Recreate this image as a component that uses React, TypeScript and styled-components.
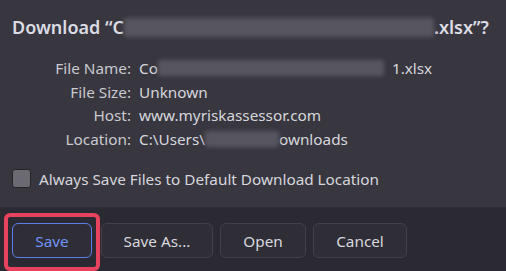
import styled, { createGlobalStyle } from "styled-components";

const Global = createGlobalStyle`
  html, body { margin: 0; padding: 0; }
  body {
    width: 506px;
    height: 271px;
    overflow: hidden;
    background: #38373f;
    font-family: "Noto Sans", "Open Sans", sans-serif;
  }
`;

const Dialog = styled.div`
  width: 506px;
  height: 271px;
  display: flex;
  flex-direction: column;
  background: #38373f;
  color: #d6d6dd;
`;

const Body = styled.div`
  flex: 1;
  padding: 13px 0 0 12px;
  display: flex;
  flex-direction: column;
`;

const Title = styled.h1`
  margin: 0;
  font-size: 18px;
  font-weight: 600;
  color: #dcdce4;
  white-space: nowrap;
  display: flex;
  align-items: center;
  height: 28px;
`;

const Smudge = styled.span<{ w: number; h?: number }>`
  display: inline-block;
  width: ${(p) => p.w}px;
  height: ${(p) => p.h ?? 16}px;
  background: #57565f;
  filter: blur(2px);
  border-radius: 3px;
  vertical-align: middle;
`;

const InfoGrid = styled.div`
  display: grid;
  grid-template-columns: 119px auto;
  column-gap: 8px;
  row-gap: 3.5px;
  margin-top: 17px;
  font-size: 15.3px;
`;

const Label = styled.div`
  text-align: right;
  color: #c9c9d0;
  height: 20px;
  line-height: 20px;
`;

const Value = styled.div`
  color: #d6d6dd;
  height: 20px;
  line-height: 20px;
  white-space: nowrap;
  display: flex;
  align-items: center;
`;

const CheckRow = styled.label`
  display: flex;
  align-items: center;
  gap: 8px;
  margin-top: 20px;
  font-size: 15.3px;
  color: #d6d6dd;
`;

const Box = styled.span`
  width: 19px;
  height: 19px;
  box-sizing: border-box;
  border: 1px solid #25242b;
  border-radius: 3px;
  background: #6b6a73;
`;

const Footer = styled.div`
  height: 64px;
  border-top: 1px solid #2f2e36;
  background: #2b2a33;
  display: flex;
  align-items: flex-start;
  gap: 7px;
  padding: 15px 0 0 12px;
  box-sizing: border-box;
`;

const Highlight = styled.div`
  border: 4px solid #e8435e;
  border-radius: 6px;
  margin: -10px -6px 0 -8px;
  padding: 6px 4px 9px 4px;
  display: flex;
`;

const Button = styled.button<{ w: number; primary?: boolean }>`
  height: 35px;
  width: ${(p) => p.w}px;
  padding: 0;
  border-radius: 6px;
  border: 1px solid ${(p) => (p.primary ? "#5a7fe6" : "#42414b")};
  background: #2f2e37;
  color: ${(p) => (p.primary ? "#6f93f5" : "#d8d8df")};
  font-family: "Noto Sans", "Open Sans", sans-serif;
  font-size: 15.3px;
`;

export default function App() {
  return (
    <>
      <Global />
      <Dialog>
        <Body>
          <Title>
            Download “C<Smudge w={310} h={19} />.xlsx”?
          </Title>
          <InfoGrid>
            <Label>File Name:</Label>
            <Value>
              Co<Smudge w={226} />&nbsp;&nbsp;1.xlsx
            </Value>
            <Label>File Size:</Label>
            <Value>Unknown</Value>
            <Label>Host:</Label>
            <Value>www.myriskassessor.com</Value>
            <Label>Location:</Label>
            <Value>
              C:\Users\<Smudge w={74} />ownloads
            </Value>
          </InfoGrid>
          <CheckRow>
            <Box />
            Always Save Files to Default Download Location
          </CheckRow>
        </Body>
        <Footer>
          <Highlight>
            <Button w={80} primary>Save</Button>
          </Highlight>
          <Button w={112}>Save As...</Button>
          <Button w={86}>Open</Button>
          <Button w={94}>Cancel</Button>
        </Footer>
      </Dialog>
    </>
  );
}
